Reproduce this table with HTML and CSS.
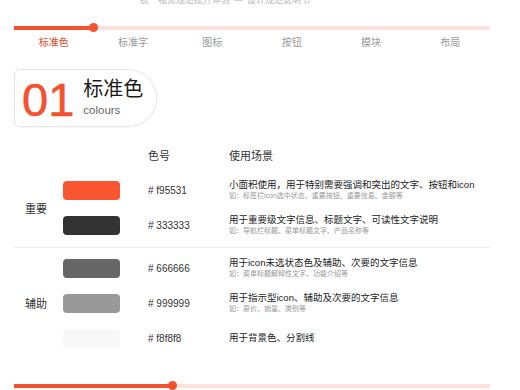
FILE: index.html
```html
<!DOCTYPE html>
<html lang="zh">
<head>
<meta charset="utf-8">
<link rel="stylesheet" href="styles.css">
</head>
<body>
<div class="page">
  <p class="intro"><span>统一视觉规范提升体验</span><span class="dash">—</span><span>设计规范说明书</span></p>

  <div class="progress"><div class="fill" style="width:79px"></div></div>
  <ul class="tabs">
    <li class="active">标准色</li>
    <li>标准字</li>
    <li>图标</li>
    <li>按钮</li>
    <li>模块</li>
    <li>布局</li>
  </ul>

  <div class="title-card">
    <span class="num">01</span>
    <div class="title-text">
      <h2>标准色</h2>
      <span class="en">colours</span>
    </div>
  </div>

  <div class="table">
    <div class="head">
      <span></span><span>色号</span><span>使用场景</span>
    </div>

    <div class="group">
      <div class="label">重要</div>
      <div class="rows">
        <div class="row">
          <span class="swatch c-f95531"></span>
          <span class="code"># f95531</span>
          <div class="desc"><p class="main">小面积使用，用于特别需要强调和突出的文字、按钮和icon</p><p class="sub">如：标签栏icon选中状态、重要按钮、重要信息、金额等</p></div>
        </div>
        <div class="row">
          <span class="swatch c-333333"></span>
          <span class="code"># 333333</span>
          <div class="desc"><p class="main">用于重要级文字信息、标题文字、可读性文字说明</p><p class="sub">如：导航栏标题、菜单标题文字、产品名称等</p></div>
        </div>
      </div>
    </div>

    <div class="divider"></div>

    <div class="group">
      <div class="label">辅助</div>
      <div class="rows">
        <div class="row">
          <span class="swatch c-666666"></span>
          <span class="code"># 666666</span>
          <div class="desc"><p class="main">用于icon未选状态色及辅助、次要的文字信息</p><p class="sub">如：菜单标题解释性文字、功能介绍等</p></div>
        </div>
        <div class="row">
          <span class="swatch c-999999"></span>
          <span class="code"># 999999</span>
          <div class="desc"><p class="main">用于指示型icon、辅助及次要的文字信息</p><p class="sub">如：原价、销量、类别等</p></div>
        </div>
        <div class="row">
          <span class="swatch c-f8f8f8"></span>
          <span class="code"># f8f8f8</span>
          <div class="desc"><p class="main">用于背景色、分割线</p></div>
        </div>
      </div>
    </div>
  </div>

  <div class="progress bottom"><div class="fill" style="width:158px"></div></div>
</div>
</body>
</html>
```

FILE: styles.css
```css
* { box-sizing: border-box; margin: 0; padding: 0; }

html, body {
  width: 520px;
  height: 390px;
  overflow: hidden;
  background: #ffffff;
}

body {
  font-family: "Liberation Sans", "Noto Sans CJK SC", sans-serif;
  color: #333333;
}

.page {
  width: 520px;
  padding: 0 30px 0 14px;
}

.intro {
  margin-top: -7px;
  margin-left: 126px;
  height: 14px;
  font-size: 9px;
  line-height: 14px;
  color: #b5b5b5;
  white-space: nowrap;
}

.intro .dash {
  margin: 0 4px;
}

.progress {
  position: relative;
  height: 4px;
  margin-top: 18.5px;
  background: #fde2dc;
}

.progress .fill {
  position: relative;
  height: 4px;
  background: #f4522e;
}

.progress .fill::after {
  content: "";
  position: absolute;
  right: -4.5px;
  top: -2.5px;
  width: 9px;
  height: 9px;
  border-radius: 50%;
  background: #f4522e;
}

.progress.bottom {
  margin-top: 28px;
}

.tabs {
  list-style: none;
  display: grid;
  grid-template-columns: repeat(6, 1fr);
  margin-top: 6px;
  font-size: 10px;
  line-height: 14px;
  color: #9a9a9a;
  text-align: center;
}

.tabs .active {
  color: #e84a2a;
}

.title-card {
  display: inline-flex;
  align-items: center;
  height: 58px;
  margin-top: 19px;
  padding: 0 13px 0 7px;
  border: 1px solid #e6e6e6;
  border-radius: 6px 29px 29px 6px;
  box-shadow: 0 1px 2px rgba(0, 0, 0, 0.04);
}

.num {
  font-size: 47px;
  line-height: 47px;
  padding-top: 3px;
  color: #f4522e;
  -webkit-text-stroke: 0.6px #f4522e;
}

.title-text {
  display: flex;
  flex-direction: column;
  margin-left: 9px;
}

.title-text h2 {
  font-size: 20px;
  font-weight: 400;
  line-height: 22px;
  color: #1a1a1a;
}

.title-text .en {
  font-size: 11.5px;
  line-height: 14px;
  margin-top: 3px;
  color: #666666;
}

.table {
  margin-top: 11px;
}

.head {
  display: grid;
  grid-template-columns: 134px 81px 1fr;
  height: 35px;
  align-items: center;
  font-size: 11px;
  color: #333333;
}

.group {
  display: flex;
}

.label {
  width: 49px;
  padding-left: 11px;
  display: flex;
  align-items: center;
  font-size: 11px;
  color: #333333;
}

.rows {
  flex: 1;
}

.row {
  display: grid;
  grid-template-columns: 85px 81px 1fr;
  align-items: center;
  height: 35px;
}

.swatch {
  display: block;
  width: 57px;
  height: 19px;
  border-radius: 4px;
}

.c-f95531 { background: #f95531; }
.c-333333 { background: #333333; }
.c-666666 { background: #666666; }
.c-999999 { background: #999999; }
.c-f8f8f8 { background: #f8f8f8; }

.code {
  font-size: 10px;
  color: #333333;
}

.desc .main {
  font-size: 9.5px;
  line-height: 12px;
  color: #222222;
  white-space: nowrap;
}

.desc .sub {
  font-size: 7px;
  line-height: 10px;
  color: #999999;
  white-space: nowrap;
}

.divider {
  height: 1px;
  margin: 4px 0 3px;
  background: #eeeeee;
}
```
